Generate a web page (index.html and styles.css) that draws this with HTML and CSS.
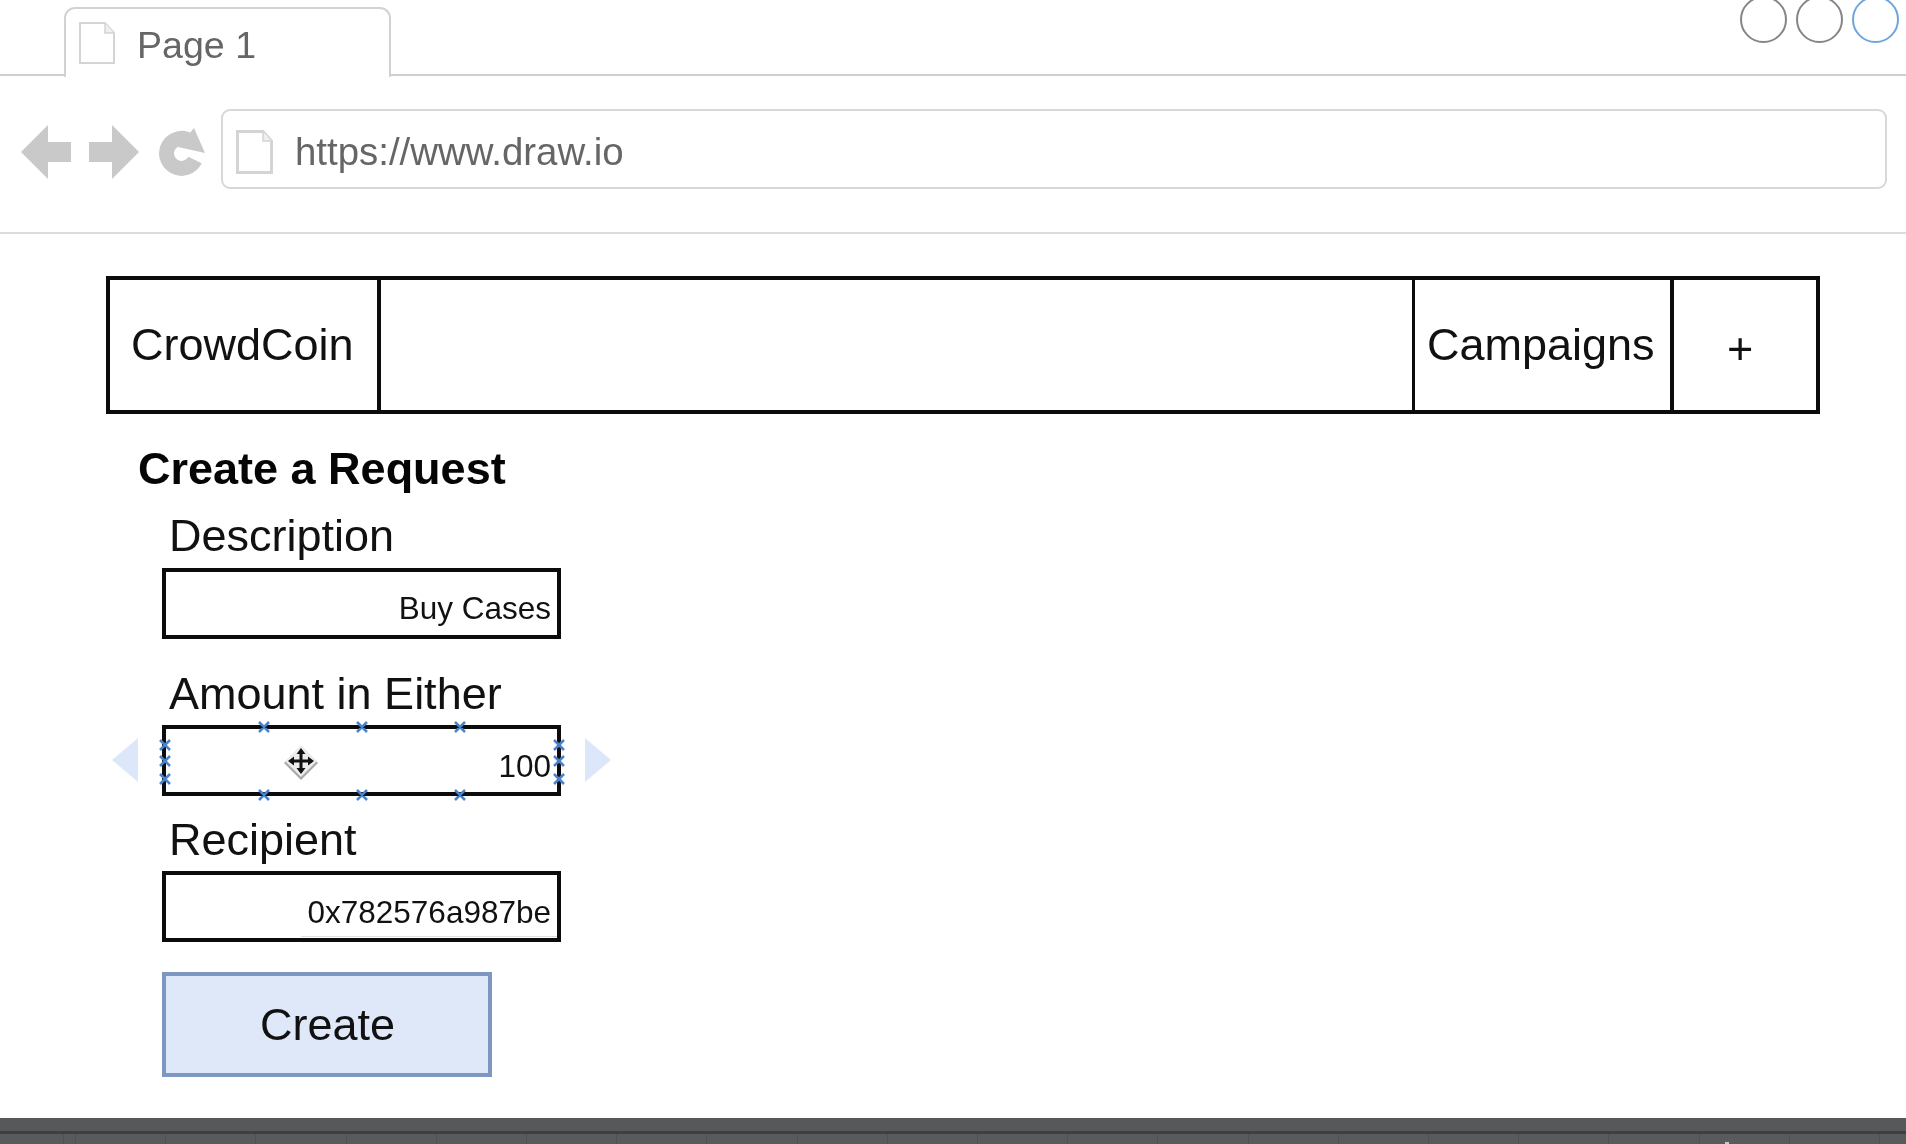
FILE: index.html
```html
<!DOCTYPE html>
<html lang="en">
<head>
<meta charset="utf-8">
<title>Page 1</title>
<link rel="stylesheet" href="styles.css">
</head>
<body>
<div class="screen">
  <header class="tabbar">
    <div class="tab">
      <svg class="page-icon tab-icon" viewBox="0 0 36 42"><path d="M1 1H26L35 11V41H1Z" fill="#fff" stroke="#d4d4d4" stroke-width="2"/><path d="M26 1V11H35" fill="#efefef" stroke="#d4d4d4" stroke-width="1.5"/></svg>
      <span class="tab-label">Page 1</span>
    </div>
    <div class="circles">
      <span class="circle"></span>
      <span class="circle"></span>
      <span class="circle circle-active"></span>
    </div>
  </header>
  <div class="toolbar">
    <svg class="arrow" viewBox="0 0 50 54"><path d="M0 27L27 0V17H50V37H27V54Z" fill="#c9c9c9"/></svg>
    <svg class="arrow arrow-next" viewBox="0 0 50 54"><path d="M50 27L23 0V17H0V37H23V54Z" fill="#c9c9c9"/></svg>
    <svg class="reload" viewBox="0 0 48 49"><path d="M33 13A15 15 0 1 0 38 32" fill="none" stroke="#c9c9c9" stroke-width="15"/><path d="M37 0L48 25L21 19Z" fill="#c9c9c9"/></svg>
    <div class="address">
      <svg class="page-icon address-icon" viewBox="0 0 37 44"><path d="M1.500 1.500H27L35.500 11V42.500H1.500Z" fill="#fff" stroke="#d4d4d4" stroke-width="3"/><path d="M27 1.500V11H35.500" fill="#efefef" stroke="#d4d4d4" stroke-width="1.500"/></svg>
      <span class="url">https://www.draw.io</span>
    </div>
  </div>
  <main class="canvas">
    <nav class="menu">
      <div class="menu-cell menu-brand">CrowdCoin</div>
      <div class="menu-cell menu-spacer"></div>
      <div class="menu-cell menu-link">Campaigns</div>
      <div class="menu-cell menu-plus">+</div>
    </nav>
    <section class="form">
      <h1 class="form-title">Create a Request</h1>
      <label class="field-label field-label-first">Description</label>
      <div class="input input-first">Buy Cases</div>
      <label class="field-label field-label-amount">Amount in Either</label>
      <div class="input input-selected">100
        <svg class="handles" viewBox="0 0 498 100">
          <path class="side-arrow" d="M26 0V44L0 22Z" transform="translate(0 13)"/>
          <path class="side-arrow" d="M0 0V44L26 22Z" transform="translate(473 13)"/>
          <g class="marks">
            <path d="M147 -3l10 10m0-10l-10 10M245 -3l10 10m0-10l-10 10M343 -3l10 10m0-10l-10 10"/>
            <path d="M147 65l10 10m0-10l-10 10M245 65l10 10m0-10l-10 10M343 65l10 10m0-10l-10 10"/>
            <path d="M48 15l10 10m0-10l-10 10M48 31l10 10m0-10l-10 10M48 49l10 10m0-10l-10 10"/>
            <path d="M442 15l10 10m0-10l-10 10M442 31l10 10m0-10l-10 10M442 49l10 10m0-10l-10 10"/>
          </g>
          <g class="cursor" transform="translate(189 36)">
            <path d="M0 -17L17 0L0 17L-17 0Z" fill="#a8a8a8" transform="translate(0 2)"/>
            <path d="M0 -16L16 0L0 16L-16 0Z" fill="#ececec"/>
            <path d="M0 -13L-4.500 -7H-1.500V-1.500H-7V-4.500L-13 0L-7 4.500V1.500H-1.500V7H-4.500L0 13L4.500 7H1.500V1.500H7V4.500L13 0L7 -4.500V-1.500H1.500V-7H4.500Z" fill="#111"/>
          </g>
        </svg>
      </div>
      <label class="field-label field-label-recipient">Recipient</label>
      <div class="input input-address">0x782576a987be</div>
      <button class="create" type="button">Create</button>
    </section>
  </main>
  <footer class="dock">
    <div class="dock-top"></div>
    <div class="dock-rule"></div>
    <div class="dock-cells"><span class="dock-dot"></span></div>
  </footer>
</div>
</body>
</html>
```

FILE: styles.css
```css
* { box-sizing: border-box; }

html, body {
  margin: 0;
  height: 100%;
  overflow: hidden;
  background: #fff;
}

.screen {
  display: flex;
  flex-direction: column;
  height: 1144px;
  font-family: "Liberation Sans", Arial, sans-serif;
  color: #111;
  filter: blur(0.55px);
}

/* browser chrome */
.tabbar {
  display: flex;
  flex: none;
  height: 76px;
  padding-left: 64px;
  border-bottom: 2px solid #cfcfcf;
}

.tab {
  display: flex;
  align-items: center;
  width: 327px;
  height: 70px;
  margin-top: 7px;
  padding: 0 0 0 13px;
  background: #fff;
  border: 2px solid #d2d2d2;
  border-bottom: 0;
  border-radius: 11px 11px 0 0;
}

.tab-icon { width: 36px; height: 42px; flex: none; }

.tab-label {
  margin: 4px 0 0 22px;
  font-size: 37.600px;
  color: #666;
}

.circles {
  display: flex;
  gap: 9px;
  margin: -4px 7px 0 auto;
}

.circle {
  width: 47px;
  height: 47px;
  border: 2px solid #858585;
  border-radius: 50%;
}

.circle-active { border-color: #6ea6dc; }

.toolbar {
  display: flex;
  flex: none;
  align-items: flex-start;
  height: 158px;
  padding: 49px 19px 0 21px;
  border-bottom: 2px solid #dcdcdc;
}

.arrow { width: 50px; height: 54px; flex: none; }
.arrow-next { margin-left: 18px; }

.reload {
  width: 48px;
  height: 49px;
  flex: none;
  margin: 3px 0 0 18px;
}

.address {
  display: flex;
  flex: 1;
  align-items: center;
  height: 80px;
  margin: -16px 0 0 16px;
  padding: 5px 0 0 13px;
  border: 2px solid #d8d8d8;
  border-radius: 9px;
}

.address-icon { width: 37px; height: 44px; flex: none; }

.url {
  margin-left: 22px;
  font-size: 38.400px;
  color: #666;
}

/* wireframe */
.canvas {
  flex: 1;
  min-height: 0;
  padding: 42px 86px 0 106px;
}

.menu {
  display: flex;
  height: 138px;
  border: 4px solid #0c0c0c;
}

.menu-cell {
  display: flex;
  height: 100%;
  padding-bottom: 1px;
  align-items: center;
  font-size: 45px;
}

.menu-brand {
  width: 271px;
  padding-left: 21px;
  border-right: 4px solid #0c0c0c;
}

.menu-spacer { flex: 1; }

.menu-link {
  width: 262px;
  padding-left: 12px;
  border-left: 3px solid #0c0c0c;
  border-right: 4px solid #0c0c0c;
}

.menu-plus {
  width: 142px;
  padding: 7px 0 0 53px;
}

.form { padding-left: 32px; }

.form-title {
  margin: 29px 0 0 0;
  font-size: 45px;
  font-weight: 700;
  line-height: 52px;
  color: #050505;
}

.field-label {
  display: block;
  width: 398px;
  margin-left: 31px;
  font-size: 45px;
  line-height: 52px;
}

.field-label-first { margin-top: 15px; }
.field-label-amount { margin-top: 29px; }
.field-label-recipient { margin-top: 18px; }

.input {
  position: relative;
  width: 399px;
  height: 71px;
  margin: 6px 0 0 24px;
  padding: 19px 6px 0 0;
  border: 4px solid #0c0c0c;
  font-size: 31.500px;
  line-height: 36px;
  text-align: right;
}

.input-first { padding-top: 18px; }
.input-selected { margin-top: 5px; }
.input-address { margin-top: 5px; }

.input-address::after {
  content: "";
  position: absolute;
  left: 135px;
  right: 0;
  bottom: 1px;
  height: 1px;
  background: #dedede;
}

.handles {
  position: absolute;
  left: -54px;
  top: -4px;
  width: 498px;
  height: 100px;
  overflow: visible;
}

.side-arrow { fill: #dce8fa; }

.marks path {
  fill: none;
  stroke: #4a83cc;
  stroke-width: 2.500;
}

.create {
  display: block;
  width: 330px;
  height: 105px;
  margin: 30px 0 0 24px;
  padding: 1px 0 0 1px;
  background: #dfe8f9;
  border: 4px solid #7d97c1;
  font: inherit;
  font-size: 45px;
  color: #111;
}

/* bottom strip */
.dock {
  display: flex;
  flex: none;
  flex-direction: column;
  height: 26px;
  background: #56585a;
}

.dock-top { height: 13px; }

.dock-rule { height: 3px; background: #3e3f41; }

.dock-cells {
  position: relative;
  flex: 1;
  background: repeating-linear-gradient(90deg, #505153 0 1px, #595a5c 1px 90.200px);
  background-position: 75px 0;
}

.dock-dot {
  position: absolute;
  left: 1725px;
  bottom: 0;
  width: 4px;
  height: 2px;
  background: #c9c9c9;
}
```
